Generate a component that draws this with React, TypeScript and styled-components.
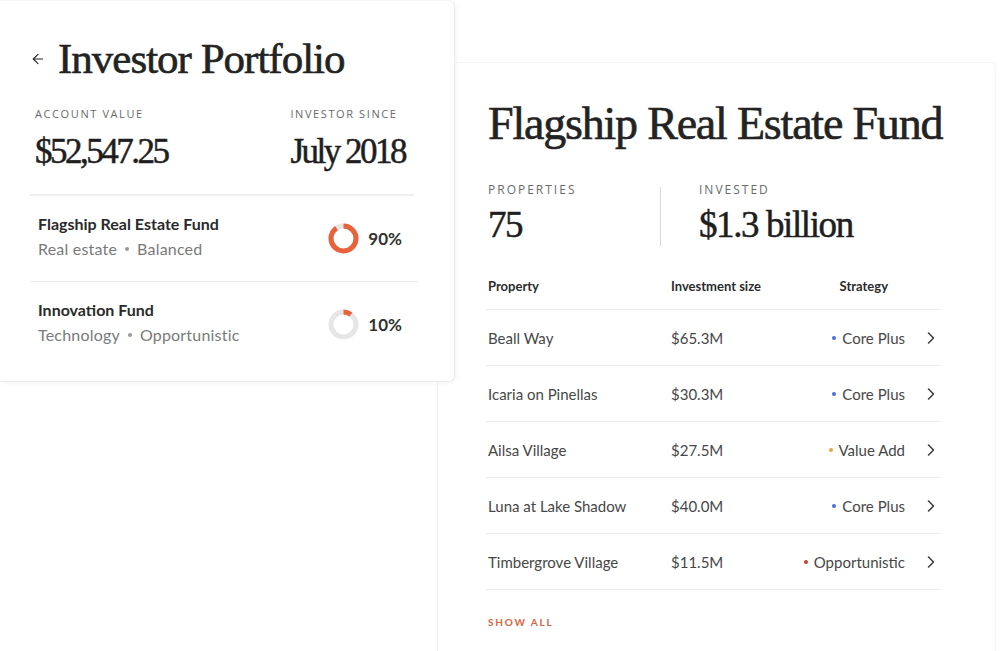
import React from 'react';
import styled, { createGlobalStyle } from 'styled-components';
import { ArrowLeft, ChevronRight } from 'lucide-react';

const GlobalStyle = createGlobalStyle`
  html, body {
    margin: 0;
    padding: 0;
    background: #ffffff;
  }
  body {
    font-family: Lato, "Open Sans", Arial, sans-serif;
    color: #2b2b2b;
  }
`;

const serif = `"Liberation Serif", "Times New Roman", serif`;

type Strategy = 'Core Plus' | 'Value Add' | 'Opportunistic';

const strategyColors: Record<Strategy, string> = {
  'Core Plus': '#4a72d9',
  'Value Add': '#eba241',
  Opportunistic: '#c2412c',
};

const properties: { name: string; size: string; strategy: Strategy }[] = [
  { name: 'Beall Way', size: '$65.3M', strategy: 'Core Plus' },
  { name: 'Icaria on Pinellas', size: '$30.3M', strategy: 'Core Plus' },
  { name: 'Ailsa Village', size: '$27.5M', strategy: 'Value Add' },
  { name: 'Luna at Lake Shadow', size: '$40.0M', strategy: 'Core Plus' },
  { name: 'Timbergrove Village', size: '$11.5M', strategy: 'Opportunistic' },
];

const funds = [
  { name: 'Flagship Real Estate Fund', type: 'Real estate', style: 'Balanced', pct: 90 },
  { name: 'Innovation Fund', type: 'Technology', style: 'Opportunistic', pct: 10 },
];

const Stage = styled.div`
  position: relative;
  width: 1000px;
  height: 651px;
  overflow: hidden;
  padding-top: 62px;
  box-sizing: border-box;
`;

const FundCard = styled.section`
  margin-left: 437px;
  width: 559px;
  min-height: 620px;
  box-sizing: border-box;
  padding: 33px 40px 0 50px;
  background: #fff;
  border-left: 1px solid #f1f1f1;
  border-top: 1px solid #f6f6f6;
  border-right: 1px solid #f6f6f6;
  border-radius: 4px 4px 0 0;
`;

const FundBody = styled.div`
  width: 453px;
`;

const PortfolioCard = styled.section`
  position: absolute;
  left: 0;
  top: 0;
  width: 455px;
  height: 382px;
  box-sizing: border-box;
  padding: 34px 49px 0 30px;
  background: #fff;
  border: 1px solid #ececec;
  border-left: none;
  border-top-color: #f4f4f4;
  border-radius: 0 6px 6px 0;
  box-shadow: 1px 1px 4px rgba(0, 0, 0, 0.05);
  z-index: 2;
`;

const TitleRow = styled.div`
  display: flex;
  align-items: center;
  gap: 12px;
  color: #222;
`;

const PageTitle = styled.h1`
  margin: 0;
  font-family: ${serif};
  font-weight: 400;
  font-size: 43px;
  line-height: 48px;
  letter-spacing: -1px;
  color: #232323;
  white-space: nowrap;
  -webkit-text-stroke: 0.6px #232323;
`;

const FundTitle = styled.h1`
  margin: 0;
  font-family: ${serif};
  font-weight: 400;
  font-size: 46px;
  line-height: 56px;
  letter-spacing: -1.2px;
  color: #232323;
  white-space: nowrap;
  -webkit-text-stroke: 0.6px #232323;
`;

const StatRow = styled.div`
  display: flex;
  justify-content: space-between;
  padding: 0 0 0 5px;
  margin-top: 24px;
`;

const Stat = styled.div<{ $gap: number }>`
  display: flex;
  flex-direction: column;
  gap: ${(p) => p.$gap}px;
`;

const Label = styled.div<{ $size: number }>`
  font-family: "Open Sans", Lato, sans-serif;
  font-size: ${(p) => p.$size}px;
  line-height: 14px;
  letter-spacing: ${(p) => (p.$size > 11 ? 2 : 1.6)}px;
  color: #6a6a6a;
  text-transform: uppercase;
`;

const BigValue = styled.div<{ $size: number; $track: number }>`
  font-family: ${serif};
  font-size: ${(p) => p.$size}px;
  line-height: ${(p) => p.$size + 6}px;
  letter-spacing: ${(p) => p.$track}px;
  color: #1e1e1e;
  white-space: nowrap;
  -webkit-text-stroke: 0.5px #1e1e1e;
`;

const Divider = styled.div`
  height: 2px;
  margin: 22px -9px 0 0;
  background: #efefef;
`;

const FundRow = styled.div<{ $last?: boolean }>`
  display: flex;
  align-items: center;
  justify-content: space-between;
  padding: 0 17px 0 8px;
  margin-right: -14px;
  height: 85px;
  border-bottom: ${(p) => (p.$last ? 'none' : '1px solid #ececec')};
`;

const FundInfo = styled.div`
  display: flex;
  flex-direction: column;
  gap: 5px;
  margin-top: -4px;
`;

const FundName = styled.div`
  font-size: 16px;
  font-weight: 700;
  color: #2a2a2a;
  line-height: 20px;
`;

const FundMeta = styled.div`
  font-size: 16px;
  letter-spacing: 0.2px;
  color: #7a7a7a;
  line-height: 20px;
  display: flex;
  align-items: center;
  gap: 8px;
`;

const Bullet = styled.span<{ $color: string }>`
  display: inline-block;
  width: 4px;
  height: 4px;
  border-radius: 50%;
  background: ${(p) => p.$color};
`;

const Allocation = styled.div`
  display: flex;
  align-items: center;
  gap: 9px;
  font-size: 17px;
  font-weight: 700;
  color: #333;
`;

const StatsGrid = styled.div`
  display: grid;
  grid-template-columns: 134px 1px auto;
  column-gap: 38px;
  margin-top: 31px;
  align-items: stretch;
`;

const VRule = styled.div`
  background: #d8d8d8;
  margin-top: 4px;
`;

const Table = styled.div`
  margin-top: 18px;
  margin-left: -2px;
`;

const TableRow = styled.div<{ $head?: boolean }>`
  display: grid;
  grid-template-columns: 183px 1fr 120px 36px;
  align-items: center;
  box-sizing: border-box;
  height: ${(p) => (p.$head ? 46 : 56)}px;
  border-bottom: 1px solid #ececec;
  padding-left: 2px;
  font-size: ${(p) => (p.$head ? 13 : 15)}px;
  color: ${(p) => (p.$head ? '#2c2c2c' : '#474747')};
  font-weight: ${(p) => (p.$head ? 700 : 400)};
`;

const HeadCell = styled.div<{ $end?: boolean }>`
  justify-self: ${(p) => (p.$end ? 'end' : 'start')};
  margin-right: ${(p) => (p.$end ? '17px' : '0')};
  margin-top: -2px;
`;

const StrategyCell = styled.div`
  justify-self: end;
  display: flex;
  align-items: center;
  gap: 6px;
`;

const Chevron = styled.div`
  display: flex;
  justify-content: center;
  padding-left: 16px;
  color: #3a3a3a;
`;

const ShowAll = styled.a`
  display: inline-block;
  margin-top: 26px;
  font-size: 10px;
  font-weight: 700;
  letter-spacing: 1.8px;
  color: #d9643f;
  text-decoration: none;
`;

function Donut({ pct }: { pct: number }) {
  const r = 12.5;
  const c = 2 * Math.PI * r;
  return (
    <svg width="31" height="31" viewBox="0 0 31 31">
      <circle cx="15.5" cy="15.5" r={r} fill="none" stroke="#e6e6e6" strokeWidth="5" />
      <circle
        cx="15.5"
        cy="15.5"
        r={r}
        fill="none"
        stroke="#e8633b"
        strokeWidth="5"
        strokeDasharray={`${(c * pct) / 100} ${c}`}
        transform="rotate(-90 15.5 15.5)"
      />
    </svg>
  );
}

export default function App() {
  return (
    <>
      <GlobalStyle />
      <Stage>
        <FundCard>
          <FundBody>
            <FundTitle>Flagship Real Estate Fund</FundTitle>
            <StatsGrid>
              <Stat $gap={6}>
                <Label $size={12}>Properties</Label>
                <BigValue $size={37} $track={-1.4}>75</BigValue>
              </Stat>
              <VRule />
              <Stat $gap={6}>
                <Label $size={12}>Invested</Label>
                <BigValue $size={37} $track={-1.4}>$1.3 billion</BigValue>
              </Stat>
            </StatsGrid>
            <Table>
              <TableRow $head>
                <HeadCell>Property</HeadCell>
                <HeadCell>Investment size</HeadCell>
                <HeadCell $end>Strategy</HeadCell>
                <div />
              </TableRow>
              {properties.map((p) => (
                <TableRow key={p.name}>
                  <div>{p.name}</div>
                  <div>{p.size}</div>
                  <StrategyCell>
                    <Bullet $color={strategyColors[p.strategy]} />
                    {p.strategy}
                  </StrategyCell>
                  <Chevron>
                    <ChevronRight size={24} strokeWidth={1.8} />
                  </Chevron>
                </TableRow>
              ))}
            </Table>
            <ShowAll href="#">SHOW ALL</ShowAll>
          </FundBody>
        </FundCard>

        <PortfolioCard>
          <TitleRow>
            <ArrowLeft size={16} strokeWidth={1.6} />
            <PageTitle>Investor Portfolio</PageTitle>
          </TitleRow>
          <StatRow>
            <Stat $gap={10}>
              <Label $size={11}>Account value</Label>
              <BigValue $size={35} $track={-2.5}>$52,547.25</BigValue>
            </Stat>
            <Stat $gap={10}>
              <Label $size={11}>Investor since</Label>
              <BigValue $size={35} $track={-2.5}>July 2018</BigValue>
            </Stat>
          </StatRow>
          <Divider />
          {funds.map((f, i) => (
            <FundRow key={f.name} $last={i === funds.length - 1}>
              <FundInfo>
                <FundName>{f.name}</FundName>
                <FundMeta>
                  {f.type}
                  <Bullet $color="#9a9a9a" />
                  {f.style}
                </FundMeta>
              </FundInfo>
              <Allocation>
                <Donut pct={f.pct} />
                {f.pct}%
              </Allocation>
            </FundRow>
          ))}
        </PortfolioCard>
      </Stage>
    </>
  );
}
